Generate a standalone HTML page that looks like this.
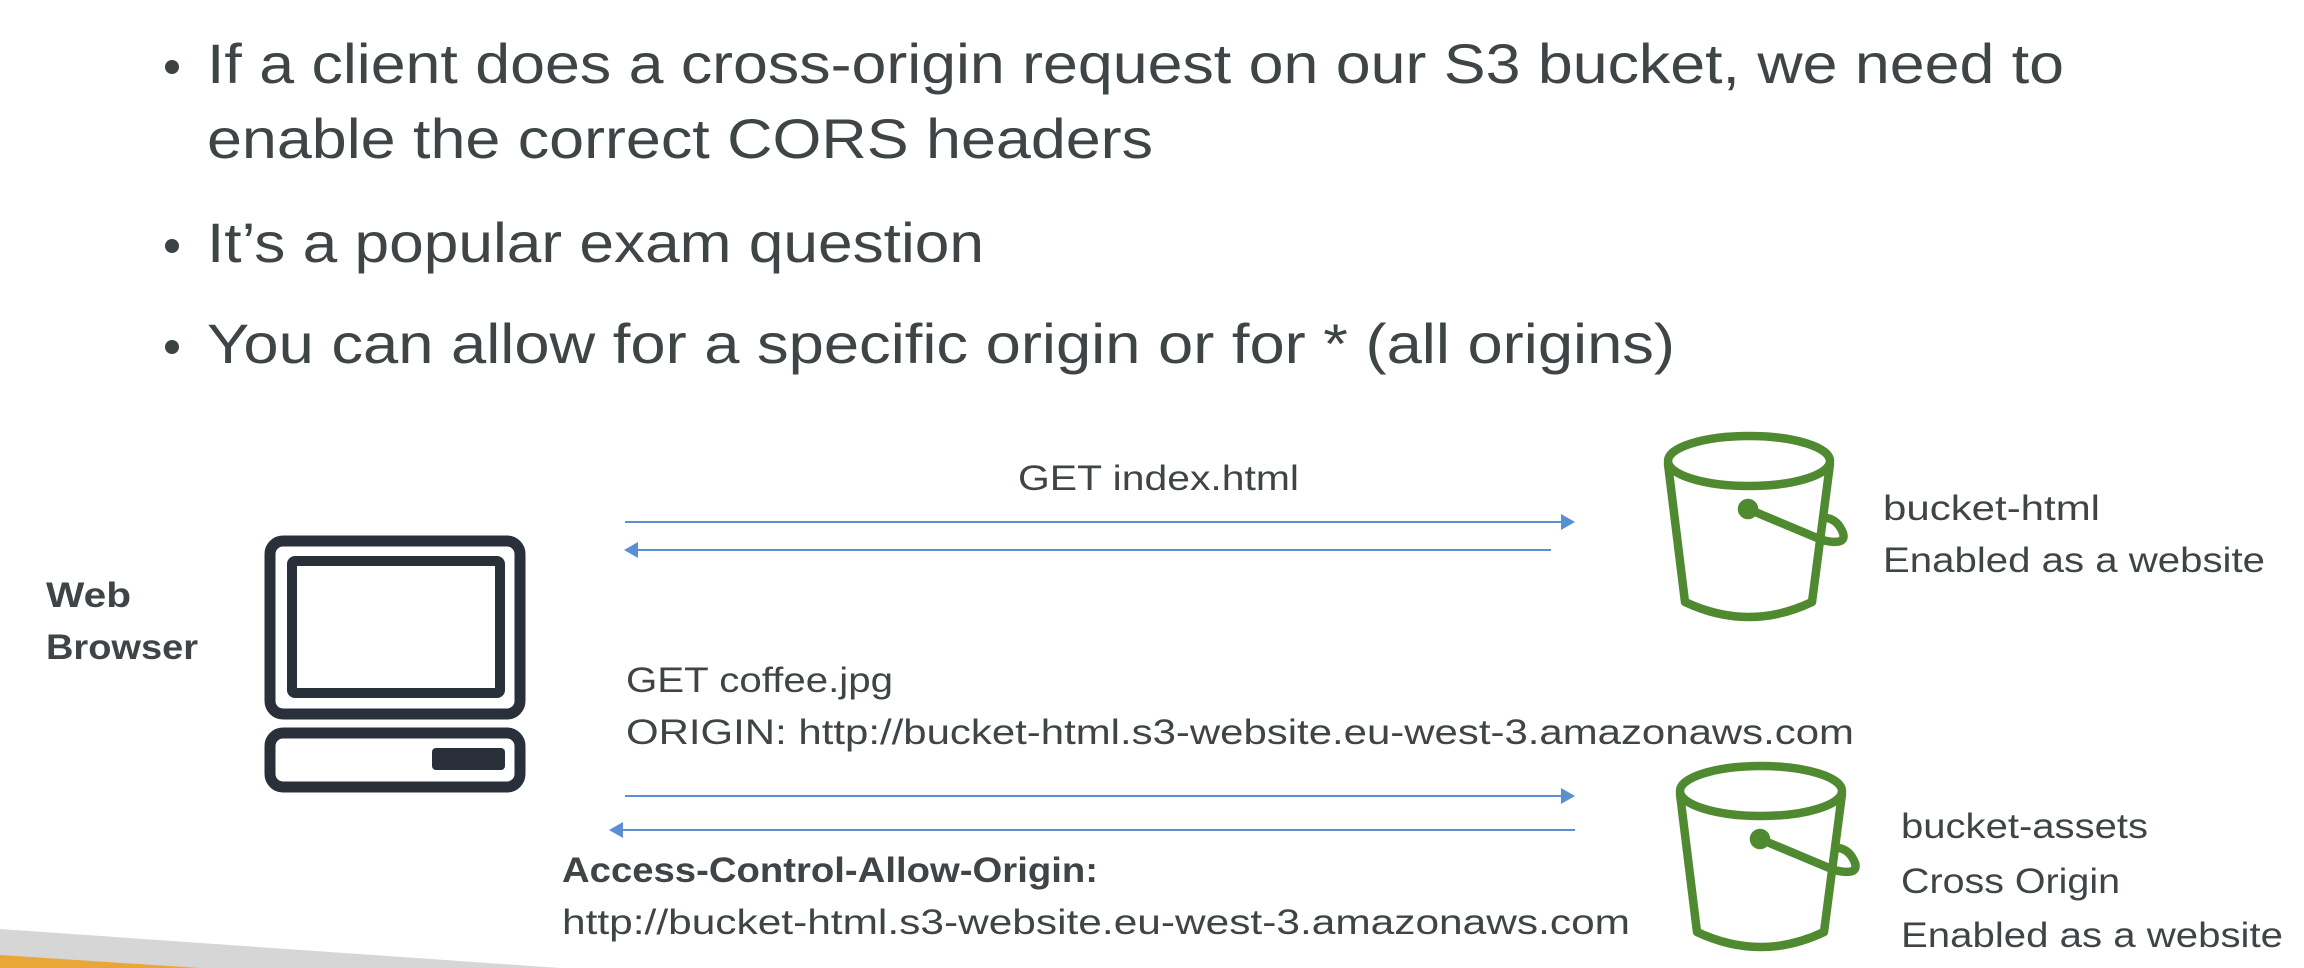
<!DOCTYPE html>
<html><head><meta charset="utf-8"><style>
html,body{margin:0;padding:0;background:#fff;width:2304px;height:968px;overflow:hidden}
svg{display:block}
text{font-family:"Liberation Sans",sans-serif;fill:#3f4546}
</style></head><body>
<svg width="2304" height="968" viewBox="0 0 2304 968" xmlns="http://www.w3.org/2000/svg">
<polygon points="0,929 560,968 0,968" fill="#d6d6d6"/>
<polygon points="0,955 200,968 0,968" fill="#eba63a"/>
<g font-size="56" style="fill:#3d4345">
<circle cx="172" cy="67" r="7" fill="#3d4345"/>
<text x="207" y="83" textLength="1857" lengthAdjust="spacingAndGlyphs">If a client does a cross-origin request on our S3 bucket, we need to</text>
<text x="207" y="158" textLength="946" lengthAdjust="spacingAndGlyphs">enable the correct CORS headers</text>
<circle cx="172" cy="246" r="7" fill="#3d4345"/>
<text x="207" y="262" textLength="777" lengthAdjust="spacingAndGlyphs">It’s a popular exam question</text>
<circle cx="172" cy="347" r="7" fill="#3d4345"/>
<text x="207" y="363" textLength="1468" lengthAdjust="spacingAndGlyphs">You can allow for a specific origin or for * (all origins)</text>
</g>
<g font-size="35">
<text x="46" y="607" font-weight="bold" textLength="85" lengthAdjust="spacingAndGlyphs">Web</text>
<text x="46" y="659" font-weight="bold" textLength="152" lengthAdjust="spacingAndGlyphs">Browser</text>
<text x="1018" y="490" textLength="281" lengthAdjust="spacingAndGlyphs">GET index.html</text>
<text x="626" y="692" textLength="267" lengthAdjust="spacingAndGlyphs">GET coffee.jpg</text>
<text x="626" y="744" textLength="1228" lengthAdjust="spacingAndGlyphs">ORIGIN: http://bucket-html.s3-website.eu-west-3.amazonaws.com</text>
<text x="562" y="882" font-weight="bold" textLength="536" lengthAdjust="spacingAndGlyphs">Access-Control-Allow-Origin:</text>
<text x="562" y="934" textLength="1068" lengthAdjust="spacingAndGlyphs">http://bucket-html.s3-website.eu-west-3.amazonaws.com</text>
<text x="1883" y="520" textLength="217" lengthAdjust="spacingAndGlyphs">bucket-html</text>
<text x="1883" y="572" textLength="382" lengthAdjust="spacingAndGlyphs">Enabled as a website</text>
<text x="1901" y="838" textLength="247" lengthAdjust="spacingAndGlyphs">bucket-assets</text>
<text x="1901" y="893" textLength="219" lengthAdjust="spacingAndGlyphs">Cross Origin</text>
<text x="1901" y="947" textLength="382" lengthAdjust="spacingAndGlyphs">Enabled as a website</text>
</g>
<g stroke="#5b8fd3" stroke-width="2" fill="#5b8fd3">
<line x1="625" y1="522" x2="1562" y2="522"/><polygon points="1575,522 1561,514 1561,530" stroke="none"/>
<line x1="636" y1="550" x2="1551" y2="550"/><polygon points="624,550 638,542 638,558" stroke="none"/>
<line x1="625" y1="796" x2="1562" y2="796"/><polygon points="1575,796 1561,788 1561,804" stroke="none"/>
<line x1="622" y1="830" x2="1575" y2="830"/><polygon points="609,830 623,822 623,838" stroke="none"/>
</g>
<g fill="none" stroke="#29303a" stroke-width="11">
<rect x="270" y="541" width="250" height="173" rx="13"/>
<rect x="292" y="561" width="208" height="132" rx="3" stroke-width="10"/>
<rect x="270" y="733" width="250" height="54" rx="13"/>
</g>
<rect x="432" y="748" width="73" height="22" rx="4" fill="#29303a"/>
<g id="b1" fill="none" stroke="#4f8a30" stroke-width="8.5" stroke-linecap="round" stroke-linejoin="round">
<ellipse cx="1749" cy="461" rx="81" ry="25"/>
<path d="M1668,464 L1685,602 Q1749,632 1812,602 L1830,464"/>
<path d="M1748,509 L1822,540 Q1847,546 1843,533 Q1838,520 1827,518"/>
<circle cx="1748" cy="509" r="6" fill="#4f8a30"/>
</g>
<use href="#b1" transform="translate(12,330)"/>
</svg>
</body></html>
